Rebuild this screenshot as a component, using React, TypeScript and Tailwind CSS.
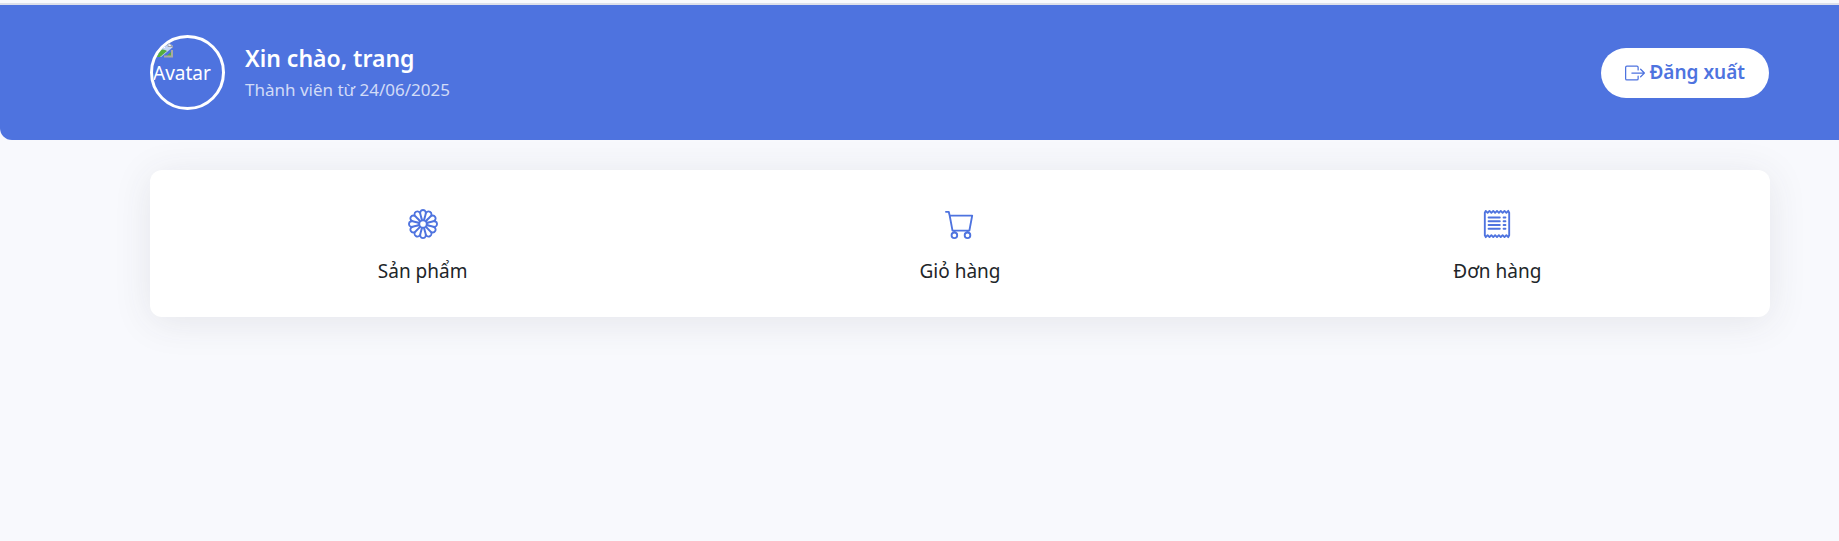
import { BsBoxArrowRight, BsCart, BsFlower1, BsReceipt } from "react-icons/bs";
import type { IconType } from "react-icons";

const links: { label: string; href: string; Icon: IconType }[] = [
  { label: "Sản phẩm", href: "#san-pham", Icon: BsFlower1 },
  { label: "Giỏ hàng", href: "#gio-hang", Icon: BsCart },
  { label: "Đơn hàng", href: "#don-hang", Icon: BsReceipt },
];

function BrokenImage() {
  return (
    <svg width="20" height="16" viewBox="0 0 20 16" className="shrink-0" aria-hidden="true">
      <path d="M0 0h15l5 4v1L8 15H0z" fill="#c3d5f5" />
      <path d="M4 6a3 3 0 0 1 5-2 2 2 0 0 1 3 2z" fill="#fff" />
      <path d="M0 13c3-5 8-7 14-4l-7 6H0z" fill="#55ad3e" />
      <path d="M0 .5h15M19.500 4v2" fill="none" stroke="#9a9fa8" />
      <path d="M15 .5v4h4.500z" fill="#eef2fa" stroke="#9a9fa8" />
      <path d="M19 9v5.500h-6z" fill="#55ad3e" />
      <path d="M19 8v6.500h-8" fill="none" stroke="#a9a9a2" strokeWidth="2" />
    </svg>
  );
}

export default function App() {
  return (
    <div className="min-h-screen bg-[#f8f9fd] font-['Noto_Sans','Open_Sans',sans-serif] text-[#212529]">
      <div className="h-[5px] border-b-2 border-[#dde0ea]" />
      <header className="flex items-center justify-between rounded-bl-xl bg-[#4e73df] py-[30px] pr-[70px] pl-[150px] text-white">
        <div className="flex items-center gap-5">
          <div
            role="img"
            aria-label="Avatar"
            className="flex size-[75px] flex-col overflow-hidden rounded-full border-3 border-white pt-1 text-[19px] leading-[30px]"
          >
            <BrokenImage />
            <span>Avatar</span>
          </div>
          <div className="pt-1">
            <h1 className="text-[23px] leading-[30px] font-semibold">Xin chào, trang</h1>
            <p className="text-[17px] leading-[34px] text-white/75">Thành viên từ 24/06/2025</p>
          </div>
        </div>
        <button
          type="button"
          className="flex h-[50px] items-center gap-1 rounded-full bg-white px-6 text-[19px] font-semibold text-[#4e73df]"
        >
          <BsBoxArrowRight className="size-5" aria-hidden="true" />
          Đăng xuất
        </button>
      </header>
      <main className="pt-[30px] pr-[69px] pl-[150px]">
        <nav className="grid grid-cols-3 rounded-xl bg-white px-1 shadow-[0_5px_38px_rgba(58,59,69,0.1)]">
          {links.map(({ label, href, Icon }) => (
            <a key={href} href={href} className="flex flex-col items-center gap-4 pt-[39px] pb-[30px] text-[19px] leading-8">
              <Icon className="size-[30px] text-[#4e73df]" aria-hidden="true" />
              {label}
            </a>
          ))}
        </nav>
      </main>
    </div>
  );
}
